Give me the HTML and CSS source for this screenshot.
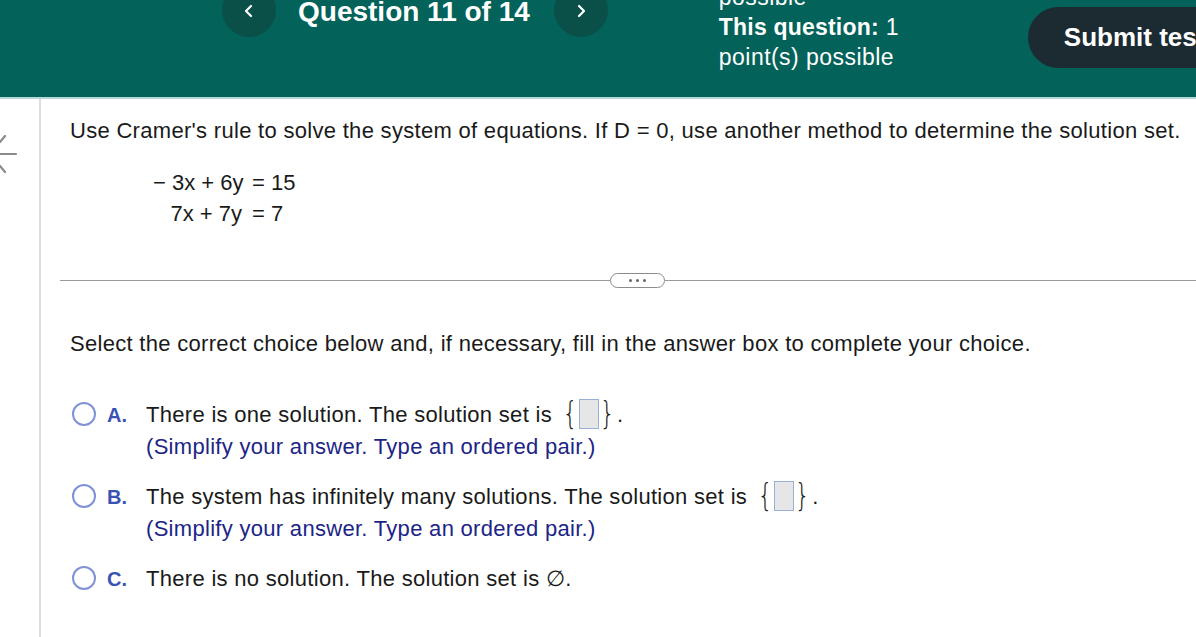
FILE: index.html
```html
<!DOCTYPE html>
<html lang="en">
<head>
<meta charset="utf-8">
<title>Question 11 of 14</title>
<link rel="stylesheet" href="styles.css">
</head>
<body>
<header class="topbar">
  <div class="nav">
    <button class="circle" aria-label="Previous question">
      <svg width="12" height="14" viewBox="0 0 12 14"><path d="M8 2 L3 7 L8 12" fill="none" stroke="#fff" stroke-width="2.2" stroke-linecap="round" stroke-linejoin="round"/></svg>
    </button>
    <h1 class="title">Question 11 of 14</h1>
    <button class="circle" aria-label="Next question">
      <svg width="12" height="14" viewBox="0 0 12 14"><path d="M4 2 L9 7 L4 12" fill="none" stroke="#fff" stroke-width="2.2" stroke-linecap="round" stroke-linejoin="round"/></svg>
    </button>
  </div>
  <div class="points">
    <div>possible</div>
    <div><b>This question:</b> 1</div>
    <div>point(s) possible</div>
  </div>
  <button class="submit">Submit test</button>
</header>
<main class="page">
  <aside class="rail">
    <svg class="back" width="20" height="48" viewBox="0 0 20 48"><path d="M0 12 L5 6 M0 36 L5 42 M0 24 L16 24" fill="none" stroke="#8a8a8a" stroke-width="2.2" stroke-linecap="round"/></svg>
  </aside>
  <section class="content">
    <p class="prompt">Use Cramer's rule to solve the system of equations. If D = 0, use another method to determine the solution set.</p>
    <div class="equations">
      <span class="lhs">− 3x + 6y</span><span class="rhs">= 15</span>
      <span class="lhs">7x + 7y</span><span class="rhs">= 7</span>
    </div>
    <div class="separator">
      <span class="line left"></span>
      <span class="pill"><i></i><i></i><i></i></span>
      <span class="line right"></span>
    </div>
    <p class="instruction">Select the correct choice below and, if necessary, fill in the answer box to complete your choice.</p>
    <div class="options">
      <div class="option">
        <span class="radio"></span>
        <span class="letter">A.</span>
        <div class="body">
          <div class="main">There is one solution. The solution set is <span class="set"><span class="brace">{</span><span class="box"></span><span class="brace">}</span></span>.</div>
          <div class="hint">(Simplify your answer. Type an ordered pair.)</div>
        </div>
      </div>
      <div class="option">
        <span class="radio"></span>
        <span class="letter">B.</span>
        <div class="body">
          <div class="main">The system has infinitely many solutions. The solution set is <span class="set"><span class="brace">{</span><span class="box"></span><span class="brace">}</span></span>.</div>
          <div class="hint">(Simplify your answer. Type an ordered pair.)</div>
        </div>
      </div>
      <div class="option">
        <span class="radio"></span>
        <span class="letter">C.</span>
        <div class="body">
          <div class="main">There is no solution. The solution set is ∅.</div>
        </div>
      </div>
    </div>
  </section>
</main>
</body>
</html>
```
FILE: styles.css
```css
* { box-sizing: border-box; }
html, body { margin: 0; padding: 0; }
body {
  font-family: "Liberation Sans", Arial, sans-serif;
  background: #fff;
  color: #1a1a1a;
  width: 1196px;
  height: 637px;
  overflow: hidden;
}

.topbar {
  display: flex;
  align-items: flex-start;
  height: 99px;
  background: #03625a;
  border-bottom: 2px solid #b7d6d8;
  padding-left: 222px;
  overflow: hidden;
  color: #fff;
}
.nav {
  display: flex;
  align-items: flex-start;
  flex: none;
}
.circle {
  width: 54px;
  height: 54px;
  margin-top: -17px;
  border: none;
  border-radius: 50%;
  background: #0a5049;
  display: flex;
  align-items: flex-end;
  justify-content: center;
  padding: 0 0 19px;
}
.title {
  margin: -2px 24px 0 22px;
  font-size: 28px;
  line-height: 28px;
  font-weight: bold;
  white-space: nowrap;
}
.points {
  flex: none;
  width: 309px;
  margin: -18px 0 0 111px;
  font-size: 23px;
  letter-spacing: 0.45px;
  line-height: 30px;
  white-space: nowrap;
}
.points b { font-weight: bold; letter-spacing: 0.2px; }
.submit {
  flex: none;
  width: 240px;
  height: 61px;
  margin-top: 7px;
  border: none;
  border-radius: 31px;
  background: #1c2a31;
  color: #fff;
  font-family: "Liberation Sans", Arial, sans-serif;
  font-size: 26px;
  font-weight: bold;
  text-align: left;
  padding: 0 0 0 36px;
  white-space: nowrap;
}

.page {
  display: flex;
  height: 538px;
}
.rail {
  flex: none;
  width: 41px;
  border-right: 2px solid #dedede;
}
.back {
  display: block;
  margin-top: 31px;
}
.content {
  flex: 1;
  padding-left: 29px;
  overflow: hidden;
  font-size: 22px;
  letter-spacing: 0.3px;
}
.prompt {
  margin: 20px 0 0;
  line-height: 24px;
  white-space: nowrap;
}
.equations {
  display: grid;
  grid-template-columns: 89px auto;
  column-gap: 10px;
  justify-content: start;
  margin: 24px 0 0 83px;
  line-height: 31px;
  letter-spacing: 0;
}
.lhs { text-align: right; white-space: nowrap; }
.rhs { white-space: nowrap; }

.separator {
  display: flex;
  align-items: center;
  height: 15px;
  margin: 44px 0 0 -10px;
}
.line {
  height: 1.5px;
  background: #9a9a9a;
}
.line.left { width: 550px; flex: none; }
.line.right { flex: 1; }
.pill {
  flex: none;
  width: 55px;
  height: 15px;
  border: 1.5px solid #8c8c8c;
  border-radius: 8px;
  display: flex;
  align-items: center;
  justify-content: center;
  gap: 4px;
}
.pill i {
  width: 3px;
  height: 3px;
  border-radius: 50%;
  background: #666;
}

.instruction {
  margin: 44px 0 0;
  line-height: 24px;
  white-space: nowrap;
}
.options {
  display: flex;
  flex-direction: column;
  gap: 18px;
  margin-top: 43px;
}
.option {
  display: flex;
  align-items: flex-start;
  line-height: 32px;
}
.radio {
  flex: none;
  width: 24px;
  height: 24px;
  margin: 3px 11px 0 2px;
  border: 2px solid #7f92d8;
  border-radius: 50%;
}
.letter {
  flex: none;
  width: 39px;
  color: #3b52b5;
  font-weight: bold;
  font-size: 20px;
  letter-spacing: 0;
}
.main { white-space: nowrap; }
.hint { color: #1c2586; }
.set {
  display: inline-flex;
  align-items: center;
  vertical-align: middle;
  margin: -4px 2px 0 4px;
  height: 32px;
  letter-spacing: 0;
}
.brace {
  font-family: "DejaVu Sans", sans-serif;
  font-weight: 200;
  font-size: 24px;
  line-height: 32px;
  transform: scaleY(1.3);
}
.box {
  width: 20px;
  height: 30px;
  margin: 0 1px;
  background: #e6e6e6;
  border: 1px solid #98aedc;
}
```
